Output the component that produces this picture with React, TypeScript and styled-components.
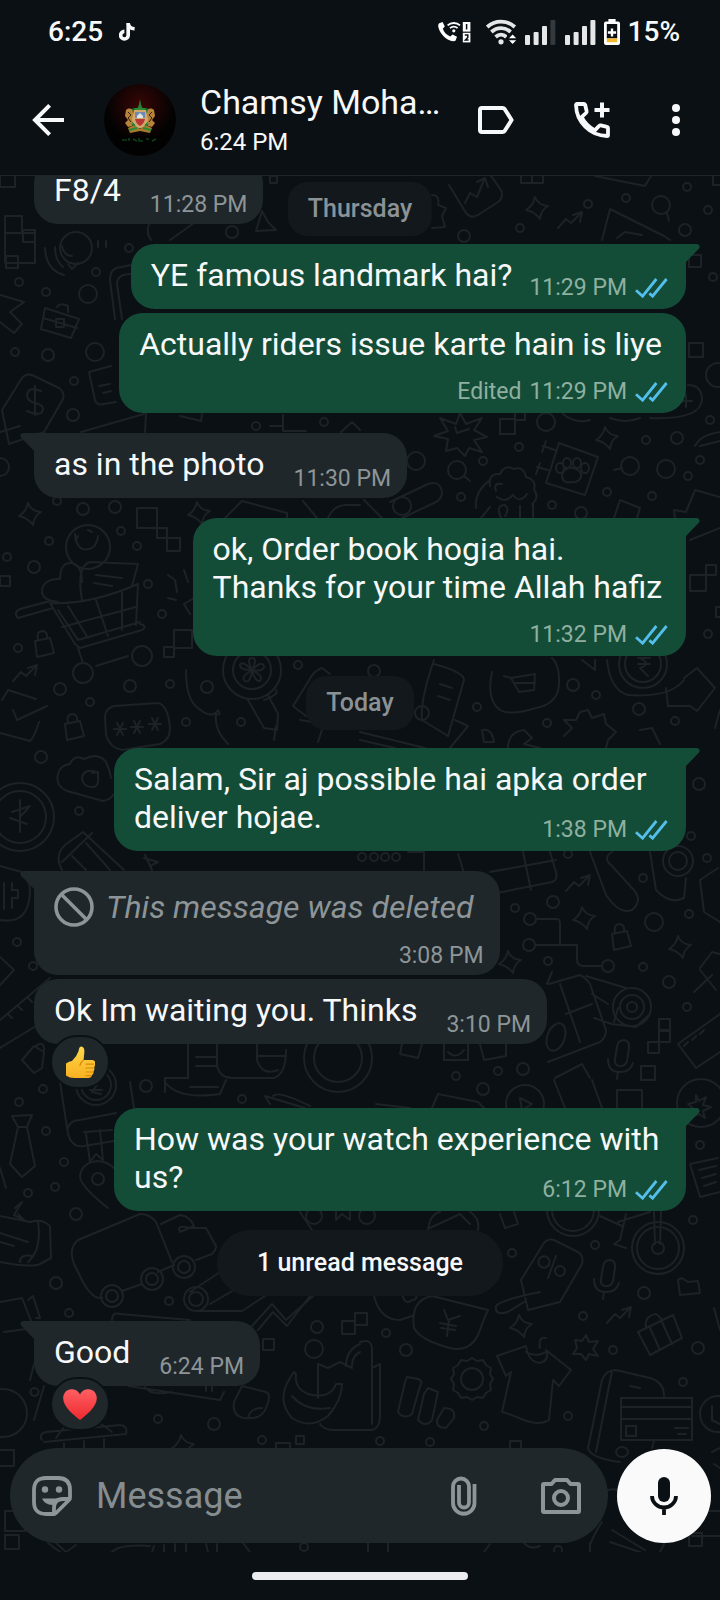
import React from "react";
import styled, { createGlobalStyle } from "styled-components";

const color = {
  page: "#0b1014",
  line: "#1c2226",
  incoming: "#1f272a",
  outgoing: "#144d37",
  text: "#f7f8fa",
  muted: "#8d9598",
  outMuted: "#8fb0a1",
  pill: "#12181c",
  tick: "#53bdeb",
};

const GlobalStyle = createGlobalStyle`
  * { box-sizing: border-box; }
  body {
    margin: 0;
    background: ${color.page};
    color: ${color.text};
    font-family: Roboto, "Noto Sans", sans-serif;
  }
  button, input { font-family: inherit; }
  svg { display: block; flex: none; }
`;

/* ---------- shell ---------- */

const Screen = styled.div`
  display: flex;
  flex-direction: column;
  height: 100vh;
  overflow: hidden;
`;

const StatusBar = styled.div`
  flex: none;
  display: flex;
  align-items: center;
  justify-content: space-between;
  height: 64px;
  padding: 0 40px 0 48px;
  font-size: 28px;
  line-height: 32px;
  font-weight: 500;
`;

const StatusGroup = styled.div<{ $gap: number }>`
  display: flex;
  align-items: center;
  gap: ${(p) => p.$gap}px;
`;

const Header = styled.header`
  flex: none;
  display: flex;
  align-items: center;
  height: 112px;
  padding: 0 32px 0 24px;
  border-bottom: 1px solid #1f2529;
`;

const IconButton = styled.button<{ $width?: number }>`
  flex: none;
  display: flex;
  align-items: center;
  justify-content: center;
  width: ${(p) => p.$width ?? 48}px;
  height: 48px;
  padding: 0;
  border: 0;
  background: none;
  color: inherit;
`;

const Avatar = styled.div`
  flex: none;
  width: 72px;
  height: 72px;
  margin-left: 32px;
  border-radius: 50%;
  overflow: hidden;
`;

const Contact = styled.div`
  flex: 1;
  min-width: 0;
  padding-left: 24px;
`;

const ContactName = styled.h1`
  margin: 0;
  font-size: 34px;
  line-height: 44px;
  font-weight: 400;
  white-space: nowrap;
`;

const ContactSeen = styled.p`
  margin: 0;
  font-size: 24px;
  line-height: 36px;
`;

const HeaderActions = styled.div`
  flex: none;
  display: flex;
  gap: 48px;
`;

/* ---------- conversation ---------- */

const Chat = styled.main`
  position: relative;
  flex: 1;
  min-height: 0;
  display: flex;
  flex-direction: column;
  overflow: hidden;
`;

const Wallpaper = styled.svg`
  position: absolute;
  inset: 0;
  width: 100%;
  height: 100%;
  fill: none;
  stroke: ${color.line};
  stroke-width: 2;
  stroke-linecap: round;
  stroke-linejoin: round;
`;

const Scroller = styled.div`
  position: relative;
  flex: 1;
  min-height: 0;
  display: flex;
  flex-direction: column-reverse;
  overflow-y: auto;
  scrollbar-width: none;
`;

const Messages = styled.div`
  display: flex;
  flex-direction: column;
  padding: 0 34px 18px;
`;

const Row = styled.div<{ $out?: boolean; $gap: number }>`
  display: flex;
  flex-direction: column;
  align-items: ${(p) => (p.$out ? "flex-end" : "flex-start")};
  margin-top: ${(p) => p.$gap}px;
  padding-left: ${(p) => (p.$out ? 80 : 0)}px;
`;

type MetaPlace = "beside" | "below" | "inline";

const BubbleBox = styled.div<{ $out?: boolean; $tail?: boolean; $place: MetaPlace }>`
  position: relative;
  display: ${(p) => (p.$place === "inline" ? "flow-root" : "grid")};
  grid-template-columns: ${(p) => (p.$place === "beside" ? "auto auto" : "auto")};
  row-gap: 7px;
  column-gap: ${(p) => (p.$out ? 17 : 29)}px;
  max-width: 100%;
  padding: ${(p) => (p.$out ? "12px 18px 7px 20px" : "12px 16px 5px 20px")};
  border-radius: 24px;
  border-top-left-radius: ${(p) => (p.$tail && !p.$out ? 0 : 24)}px;
  border-top-right-radius: ${(p) => (p.$tail && p.$out ? 0 : 24)}px;
  background: ${(p) => (p.$out ? color.outgoing : color.incoming)};
  color: ${(p) => (p.$out ? color.outMuted : color.muted)};
`;

const TailShape = styled.svg<{ $out?: boolean }>`
  position: absolute;
  top: 0;
  ${(p) => (p.$out ? "right: -14px;" : "left: -14px; transform: scaleX(-1);")}
  fill: ${(p) => (p.$out ? color.outgoing : color.incoming)};
`;

const Text = styled.p<{ $out?: boolean; $place: MetaPlace }>`
  display: ${(p) => (p.$place === "inline" ? "inline" : "block")};
  margin: 0 ${(p) => (p.$place === "below" ? 6 : 0)}px ${(p) => (p.$out ? 8 : 10)}px 0;
  color: ${color.text};
  font-size: 32px;
  line-height: 38px;
  white-space: pre-line;
`;

const DeletedText = styled.p`
  display: flex;
  align-items: center;
  gap: 12px;
  margin: 4px 10px 8px 0;
  font-size: 32px;
  line-height: 38px;
  font-style: italic;
`;

const Meta = styled.div<{ $place: MetaPlace }>`
  display: flex;
  align-items: center;
  align-self: end;
  justify-self: end;
  gap: 8px;
  font-size: 23px;
  line-height: 28px;
  white-space: nowrap;
  ${(p) => p.$place === "inline" && "float: right; margin-top: 18px;"}
`;

const Reaction = styled.button`
  position: relative;
  display: flex;
  align-items: center;
  justify-content: center;
  width: 60px;
  height: 54px;
  margin: -9px 0 -1px 16px;
  padding: 0;
  border: 2px solid ${color.page};
  border-radius: 27px;
  background: ${color.incoming};
`;

const DatePill = styled.div<{ $floating?: boolean }>`
  align-self: center;
  padding: 13px 20px;
  border-radius: 20px;
  background: ${color.pill};
  color: #8b9296;
  font-size: 25px;
  line-height: 28px;
  font-weight: 500;
  margin-top: 20px;
  ${(p) =>
    p.$floating &&
    "position: absolute; top: 6px; left: 50%; margin: 0; transform: translateX(-50%);"}
`;

const UnreadPill = styled.div`
  align-self: center;
  margin: 19px 0 5px;
  padding: 19px 40px;
  border-radius: 33px;
  background: ${color.pill};
  font-size: 25px;
  line-height: 28px;
  font-weight: 500;
`;

/* ---------- composer ---------- */

const Composer = styled.form`
  position: relative;
  flex: none;
  display: flex;
  align-items: center;
  gap: 9px;
  padding: 0 9px 9px 10px;
`;

const Field = styled.div`
  flex: 1;
  min-width: 0;
  display: flex;
  align-items: center;
  height: 95px;
  padding: 0 23px 0 18px;
  border-radius: 48px;
  background: ${color.incoming};
  color: ${color.muted};
`;

const MessageInput = styled.input`
  flex: 1;
  min-width: 0;
  padding: 0 0 0 20px;
  border: 0;
  outline: 0;
  background: none;
  color: ${color.text};
  font-size: 36px;
  line-height: 44px;
  &::placeholder {
    color: #868d91;
    opacity: 1;
  }
`;

const FieldActions = styled.div`
  flex: none;
  display: flex;
  gap: 49px;
`;

const MicButton = styled.button`
  flex: none;
  display: flex;
  align-items: center;
  justify-content: center;
  width: 94px;
  height: 94px;
  padding: 0;
  border: 0;
  border-radius: 50%;
  background: #fafafa;
  color: ${color.page};
`;

const NavBar = styled.div`
  flex: none;
  display: flex;
  justify-content: center;
  height: 48px;
  padding-top: 20px;
`;

const NavHandle = styled.div`
  width: 30%;
  height: 8px;
  border-radius: 4px;
  background: #ececee;
`;

/* ---------- icons ---------- */

const TikTokIcon = () => (
  <svg width="16" height="18" viewBox="0 0 16 18" fill="none" stroke="currentColor" strokeWidth="3.6">
    <path d="M9.2 0V12.4A3.8 3.8 0 1 1 5.4 8.4" />
    <path d="M9.2 .4C9.6 3.6 12 5.6 15.6 5.8" />
  </svg>
);

const WifiCallIcon = () => (
  <svg width="33" height="22" viewBox="0 0 33 22" fill="none">
    <path
      fill="#fff"
      d="M1.2 2.2 4.6 1 6.8 5.6 4.8 7.8C6 11.4 8.6 14 12.2 15.4L14.6 13.4 19 15.8 17.6 19.4C16.8 20.6 14 20.4 11.4 19.2 6 16.8 1.6 11.6.4 6.2 0 4.4.2 3 1.2 2.2Z"
    />
    <path stroke="#fff" strokeWidth="1.8" d="M9.6 4.4C13 1.2 18.6 1.2 22 4.4M12 7.2C14.2 5.2 17.4 5.2 19.6 7.2" />
    <circle cx="15.8" cy="9.8" r="1.6" fill="#fff" />
    <rect x="24.8" y="1" width="7.6" height="9.6" fill="#fff" />
    <rect x="24.8" y="11.8" width="7.6" height="9.6" fill="#fff" />
    <path stroke={color.page} strokeWidth="1.5" d="M28.6 3V8.6M26.8 14H29.8V16.4L27.4 19H30.6" />
  </svg>
);

const WifiIcon = () => (
  <svg width="31" height="26" viewBox="0 0 31 26" fill="none" stroke="#e4e6e8" strokeWidth="3.8">
    <path d="M1.2 8C9 .8 21 .8 28.8 8M5.4 13C11 7.8 19 7.8 24.6 13M9.6 18C12.8 15 17.2 15 20.4 18" />
    <circle cx="15" cy="22.8" r="2.6" fill="#e4e6e8" stroke="none" />
    <path fill={color.page} stroke="none" d="M21 14.5H31V26H21Z" />
    <path fill="#fff" stroke="none" d="M23 19.2 26.6 15.4 30.2 19.2ZM23 21.2H30.2L26.6 25Z" />
  </svg>
);

const SignalIcon = ({ dim }: { dim?: boolean }) => (
  <svg width="31" height="25" viewBox="0 0 31 25" fill="#e4e6e8">
    <rect x="0" y="15" width="5" height="10" rx="1" />
    <rect x="8.6" y="12" width="5" height="13" rx="1" />
    <rect x="17" y="6" width="5" height="19" rx="1" />
    <rect x="25.4" y="0" width="5" height="25" rx="1" fill={dim ? "#34393d" : "#e4e6e8"} />
  </svg>
);

const BatteryIcon = () => (
  <svg width="16" height="26" viewBox="0 0 16 26">
    <path fill="#fff" d="M4.4 0H11.6V2.4H14A2 2 0 0 1 16 4.4V24A2 2 0 0 1 14 26H2A2 2 0 0 1 0 24V4.4A2 2 0 0 1 2 2.4H4.4Z" />
    <rect x="2.8" y="5" width="10.4" height="14.4" fill={color.page} />
    <rect x="2.8" y="19.4" width="10.4" height="3.8" fill="#f5b82e" />
    <path stroke="#fff" strokeWidth="2.4" d="M8 9.4V17.6M3.9 13.5H12.1" />
  </svg>
);

const BackIcon = () => (
  <svg width="32" height="32" viewBox="0 0 32 32" fill="none" stroke="currentColor" strokeWidth="4">
    <path d="M32 16H3M17.6 1.4 3 16 17.6 30.6" />
  </svg>
);

const LabelIcon = () => (
  <svg width="36" height="28" viewBox="0 0 36 28" fill="none" stroke="currentColor" strokeWidth="4" strokeLinejoin="round">
    <path d="M4 2H24.6Q25.8 2 26.6 3L33.6 14 26.6 25Q25.8 26 24.6 26H4Q2 26 2 24V4Q2 2 4 2Z" />
  </svg>
);

const AddCallIcon = () => (
  <svg width="36" height="36" viewBox="0 0 36 36" fill="none" stroke="currentColor" strokeWidth="3.8" strokeLinejoin="round">
    <path d="M2 3Q2 2 3 2H10Q11 2 11.2 3L12.6 9.2Q12.8 10.2 12 11L7.6 15.2C10.4 20.6 15.4 25.6 20.8 28.4L25 24Q25.8 23.2 26.8 23.4L33 24.8Q34 25 34 26V33Q34 34 33 34C16 33.6 2.4 20 2 3Z" />
    <path strokeWidth="4" d="M28 .5V15.5M20.5 8H35.5" />
  </svg>
);

const MoreIcon = () => (
  <svg width="8" height="32" viewBox="0 0 8 32" fill="currentColor">
    <circle cx="4" cy="4" r="4" />
    <circle cx="4" cy="16" r="4" />
    <circle cx="4" cy="28" r="4" />
  </svg>
);

const AvatarArt = () => (
  <svg width="72" height="72" viewBox="0 0 72 72">
    <defs>
      <radialGradient id="glow" cx="50%" cy="30%" r="48%">
        <stop offset="0" stopColor="#3a0606" />
        <stop offset="1" stopColor="#020202" />
      </radialGradient>
    </defs>
    <rect width="72" height="72" fill="url(#glow)" />
    <path fill="#2a7a33" d="M36 15 37.2 21 39 25H33L34.800 21Z" />
    <path fill="#1d6b2c" d="M22 27 30 24H42L50 27 47 31H25Z" />
    <path
      fill="#b5833a"
      d="M22 26C26 23 29 25 29 29L31 35 28 42 24 43 21 39 24 36 21 32ZM50 26C46 23 43 25 43 29L41 35 44 42 48 43 51 39 48 36 51 32Z"
    />
    <path fill="none" stroke="#3a1f0a" strokeWidth="1" d="M24 28 27 31 24 34 27 38M48 28 45 31 48 34 45 38" />
    <path fill="#a87a2c" d="M24 44 30 41 36 45 42 41 48 44 46 49 36 47 26 49Z" />
    <path fill="#cfa86a" d="M30 26H42L44 36Q42 43 36 44.5 30 43 28 36Z" />
    <path fill="#b93636" d="M31 35H41Q40 40 36 42 32 40 31 35Z" />
    <path fill="#7088ad" d="M31 28H41V34H31Z" />
    <path fill="#dfe5e2" d="M33 32 36 29 39 32V34H33Z" />
    <path stroke="#2a8a38" strokeWidth="2" fill="none" d="M25 46 33 44M39 44 47 46M31 25H41M28 39 31 42M44 39 41 42" />
    <path stroke="#0e3f17" strokeWidth="1.6" fill="none" d="M18 56H23M25 54V57M29 55 33 57M35 54V57H39M42 55H45M48 57 52 55" />
  </svg>
);

const TicksIcon = () => (
  <svg width="33" height="20" viewBox="0 0 33 20" fill="none" stroke={color.tick} strokeWidth="2.8" role="img" aria-label="Read">
    <path d="M1 12.2 7.6 18.2 21.4 1M14.4 15.4 17.6 18.2 31.6 1" />
  </svg>
);

const BlockedIcon = () => (
  <svg width="40" height="40" viewBox="0 0 40 40" fill="none" stroke="currentColor" strokeWidth="3.6">
    <circle cx="20" cy="20" r="18" />
    <path d="M7 7 33 33" />
  </svg>
);

const ThumbIcon = () => (
  <svg width="31" height="33" viewBox="0 0 31 33" role="img" aria-label="Thumbs up">
    <defs>
      <linearGradient id="thumb" x1="0" y1="0" x2="0" y2="1">
        <stop offset="0" stopColor="#ffd84a" />
        <stop offset="1" stopColor="#f9b021" />
      </linearGradient>
    </defs>
    <path
      fill="url(#thumb)"
      d="M1 17.5Q4 15 7 15 12 10 13.6 5 14 .6 16.600 .6 20 1.500 19.300 7L18.600 14H27.500Q30.400 14.500 30 17 30.500 19.500 29.300 21 30 23.500 28.600 25.500 28.800 28 27 29 26.500 32 23 32H11Q5 32.500 1 29.500Z"
    />
    <path fill="none" stroke="#d98a0a" strokeWidth="1.2" d="M29 18.200H20.500M29 22H20.500M28 26H20.500M26.500 29.600H20.500M18.600 14Q15 17 14.800 20" />
  </svg>
);

const HeartIcon = () => (
  <svg width="34" height="31" viewBox="0 0 34 31" role="img" aria-label="Red heart">
    <defs>
      <linearGradient id="heart" x1="0" y1="0" x2="0" y2="1">
        <stop offset="0" stopColor="#ff5f62" />
        <stop offset="1" stopColor="#ee2a30" />
      </linearGradient>
    </defs>
    <path
      fill="url(#heart)"
      d="M17 5.500C19 1.500 22.500 .3 25.500 .3 30.500 .3 34 4.500 33.800 9.500 33.500 17.500 25 24.500 18.500 30Q17 31.300 15.500 30C9 24.500 .5 17.500 .2 9.500 0 4.500 3.500 .3 8.500 .3 11.500 .3 15 1.500 17 5.500Z"
    />
  </svg>
);

const StickerIcon = () => (
  <svg width="40" height="40" viewBox="0 0 40 40" fill="none" stroke="currentColor" strokeWidth="3.8" strokeLinejoin="round">
    <path d="M22 38H14Q2 38 2 26V14Q2 2 14 2H26Q38 2 38 14V21.500Q38 23 37 24L24 37Q23 38 22 38Z" />
    <path d="M22 37V32Q22 23 31 23H37" />
    <circle cx="13" cy="13.5" r="3.2" fill="currentColor" stroke="none" />
    <circle cx="27" cy="13.5" r="3.2" fill="currentColor" stroke="none" />
    <path fill="currentColor" stroke="none" d="M10 22.500H26.500Q22.500 25 21.500 29 13 29.500 10 22.500Z" />
  </svg>
);

const ClipIcon = () => (
  <svg width="26" height="40" viewBox="0 0 26 40" fill="none" stroke="currentColor" strokeWidth="3.8">
    <path d="M23.500 8V27A10.700 10.700 0 0 1 2 27V10.500A8 8 0 0 1 18 10.500V26.500A5 5 0 0 1 8 26.500V9" />
  </svg>
);

const CameraIcon = () => (
  <svg width="40" height="36" viewBox="0 0 40 36" fill="none" stroke="currentColor" strokeWidth="4" strokeLinejoin="round">
    <path d="M3 6H10.500L14 2H26L29.500 6H37Q38 6 38 7V33Q38 34 37 34H3Q2 34 2 33V7Q2 6 3 6Z" />
    <circle cx="20" cy="20" r="7" />
  </svg>
);

const MicIcon = () => (
  <svg width="28" height="38" viewBox="0 0 28 38" fill="none" stroke="currentColor" strokeWidth="3.8">
    <rect x="8" y="0" width="12" height="25" rx="6" fill="currentColor" stroke="none" />
    <path d="M2 19A12 11.500 0 0 0 26 19M14 30V38" />
  </svg>
);

/* ---------- wallpaper ---------- */

type Dot = [number, number];

const smallDots: Dot[] = [
  [687, 187], [626, 198], [588, 204], [520, 228], [708, 210], [19, 282], [46, 292], [96, 272],
  [129, 248], [15, 352], [74, 381], [49, 541], [121, 531], [137, 546], [7, 557], [148, 584],
  [162, 614], [18, 648], [324, 422], [57, 501], [710, 420], [646, 440], [519, 447], [483, 461],
  [461, 497], [552, 505], [607, 492], [652, 496], [688, 476], [700, 460], [713, 277], [708, 634],
  [90, 702], [170, 684], [186, 722], [241, 722], [298, 665], [79, 811], [17, 942], [33, 966],
  [477, 707], [547, 723], [596, 695], [675, 721], [691, 836], [643, 878], [568, 854], [515, 908],
  [548, 961], [643, 967], [689, 914], [707, 858], [687, 1007], [498, 1071], [456, 1076], [43, 1089],
  [19, 1102], [46, 1131], [64, 1162], [28, 1193], [55, 1187], [69, 1313], [169, 1301], [242, 1099],
  [512, 1253], [595, 1245], [693, 1220], [583, 1316], [700, 1145], [386, 1333], [158, 1419],
  [262, 1440], [613, 1350], [683, 1382], [568, 1416], [484, 1426], [380, 1441], [430, 1442],
  [304, 1547], [558, 1550], [374, 857], [385, 857], [396, 857], [362, 857],
];

const mediumDots: Dot[] = [
  [685, 230], [232, 232], [48, 355], [73, 415], [83, 509], [115, 507], [34, 567], [677, 438],
  [581, 513], [60, 689], [130, 686], [41, 757], [207, 687], [374, 671], [573, 685], [639, 709],
  [699, 784], [553, 902], [669, 982], [523, 1069], [146, 1086], [76, 1214], [56, 1283], [317, 1327],
  [483, 1089], [644, 1293], [214, 1424], [406, 1350], [698, 1348], [464, 236],
];

const largeDots: Dot[] = [
  [88, 294], [95, 352], [0, 467], [546, 422], [666, 469], [654, 922], [314, 1349], [661, 205],
  [630, 466], [457, 470], [416, 461], [402, 506],
];

const sparkles: Dot[] = [
  [537, 208], [30, 514], [199, 513], [607, 438], [584, 918], [680, 947], [510, 962], [521, 1326],
  [183, 1446],
];

const trends: Dot[] = [[570, 220], [25, 673], [578, 883], [619, 1315]];

const padlocks: Dot[] = [[43, 645], [73, 728], [620, 938]];

const mics: Dot[] = [[622, 1055], [608, 1275]];

const rings: [number, number, number][] = [
  [76, 248, 16], [252, 670, 29], [252, 670, 19], [20, 817, 34], [20, 817, 26], [88, 547, 22],
  [643, 664, 24], [643, 664, 18], [678, 861, 15], [678, 861, 9], [632, 1007, 19], [632, 1007, 12],
  [632, 1007, 5], [701, 1103, 24], [573, 1210, 26], [573, 1210, 21], [658, 1248, 26], [658, 1248, 21],
  [658, 1248, 6], [112, 1296, 11], [112, 1296, 6], [152, 1279, 11], [152, 1279, 6], [184, 1267, 11],
  [184, 1267, 6], [196, 1299, 12], [196, 1299, 7], [98, 1179, 6], [472, 1379, 11], [3, 1413, 24],
  [718, 1414, 18], [530, 919, 6], [529, 945, 6], [608, 966, 6], [422, 713, 7], [338, 1058, 34],
  [338, 1058, 24], [83, 673, 10], [142, 656, 10], [96, 1085, 20], [96, 1085, 15], [525, 1104, 19],
  [256, 426, 4], [367, 1216, 8], [314, 1216, 8], [718, 375, 12],
];

const squares: [number, number, number][] = [
  [0, 172, 15], [5, 216, 17], [5, 233, 30], [23, 230, 12], [270, 176, 7], [6, 256, 12], [137, 508, 20],
  [157, 528, 10], [167, 538, 13], [174, 630, 18], [164, 647, 10], [0, 576, 10], [500, 419, 15],
  [515, 410, 10], [689, 343, 14], [689, 255, 12], [706, 565, 10], [716, 607, 10], [690, 575, 16],
  [659, 1019, 11], [648, 1042, 11], [659, 1031, 11], [342, 1321, 13], [355, 1313, 12], [263, 1339, 11],
  [276, 1443, 14], [296, 1436, 8], [510, 1441, 11], [5, 1511, 20], [5, 1535, 14], [617, 1090, 25],
  [641, 1066, 14], [689, 1533, 13], [368, 1542, 20],
];

const sketches = [
  // chart card, box and flyer beneath the header
  "M449 185 466 213Q471 219 478 215L498 202Q504 198 501 190L491 176M465 203 470 193 477 197 484 180M477 182 485 178 488 187",
  "M521 176V183H543V176M532 176V183M595 176 645 186 651 176M432 195Q440 195 438 205L446 208 442 216 445 227 432 228",
  "M602 240 610 209 664 236 670 240M617 238 625 232 642 235M713 176V185H720",
  "M150 222Q145 232 151 240M194 223 170 240M256 231 262 211 268 222 276 230ZM667 213 669 221",
  // talking phone and its waves
  "M68 264 72 269 78 263M45 248Q46 270 64 275M55 247Q55 260 63 267M62 246Q64 256 72 256M98 247V241M106 247V241",
  // pen tip, briefcase, price tag
  "M0 295 24 302 10 312 22 324 14 333 0 322M45 308 79 319 71 338 41 329ZM57 307Q60 302 68 306V312M43 318 77 328M56 319H64V327H56Z",
  "M2 410 22 378Q26 373 32 375L59 388Q65 392 63 399L44 432M2 410 9 444 44 432M41 391Q28 386 27 395 27 401 35 403 44 405 43 410 41 417 27 411M35 386V415M0 432 20 426",
  "M115 319 110 280Q110 267 122 267L131 265M122 319 117 284Q117 274 131 274M89 372 111 366M89 372 95 400Q97 406 104 404L116 402M99 386 110 384M103 393 111 391M81 432 144 414M146 414 145 432",
  "M180 416 201 421 202 414M270 426H283V431H306M283 426V415M341 432 352 422 360 430",
  // starburst, paw card, poodle
  "M434 436 448 431 440 418 456 424 460 413 466 424 482 418 474 430 487 437 474 440 482 452 469 448 465 456 457 448 446 451 448 439ZM455 427 457 433 469 429",
  "M559 443 598 457 585 495 546 483ZM562 475Q565 466 573 468 582 470 581 477 578 483 572 482 562 484 562 475ZM543 446 555 450M546 441 542 452M537 467 548 470M540 463 536 474",
  "M560 463A4 5 0 1 1 560 473 4 5 0 1 1 560 463M567 458A4 5 0 1 1 567 468 4 5 0 1 1 567 458M577 458A4 5 0 1 1 577 468 4 5 0 1 1 577 458M585 463A4 5 0 1 1 585 473 4 5 0 1 1 585 463",
  "M490 486Q488 473 500 474 505 464 514 469 524 466 526 477 537 480 534 490 540 497 532 504M496 491Q493 482 502 484M497 497Q505 504 513 495 520 504 527 494M490 480Q474 492 476 508M501 518Q495 505 505 505 510 510 505 516M520 506V518M533 504V518M481 518 490 507",
  "M390 502 428 484Q440 480 442 492 442 500 434 503L402 518M364 500 382 518M464 476 470 481M614 470 622 468M614 518 620 500 640 508 637 518M675 518 674 510 686 512 695 490 720 497M690 540 720 528M695 446Q700 435 720 432M700 446 720 441",
  "M225 518 242 501 287 513V518M303 501 317 518M328 518Q333 506 345 505H360M563 414Q575 424 590 420M610 418Q625 424 640 418M650 418Q700 420 702 400 702 385 688 385M680 401H692M686 395V407",
  // shopping cart full of goods
  "M18 618Q13 612 20 609L50 601M18 618 53 608M50 603 75 644M58 610 78 640 140 622M75 644 80 648 142 630Q148 626 140 624M50 603Q90 605 138 584L136 625M68 606 88 638M96 600 108 636M122 592V630M62 627 136 607M78 648 83 663M96 666 128 656",
  "M58 602Q38 600 43 586 48 578 60 579 60 562 72 563 82 566 82 582M82 600Q76 566 90 562L138 564 132 586M96 575 122 578M94 583 112 586M75 534Q75 544 82 549 96 552 98 536M76 540 78 536M88 530 92 532",
  "M168 575 175 580 177 592M168 598 176 600M184 570 188 582M194 598 184 604 190 614",
  // mail, password plate, cloud, guitar pick
  "M2 700 8 690 36 699M13 710 17 720 47 706M0 733 30 741Q34 738 39 722M114 706 158 703Q168 705 170 728 170 740 160 744L122 750Q110 748 106 735L105 716Q106 708 114 706Z",
  "M114 729H126M117 723 123 735M123 723 117 735M131 727H143M134 721 140 733M140 721 134 733M149 724H161M152 718 158 730M158 718 152 730",
  "M67 791Q55 786 58 774 60 765 70 764 74 754 84 759 98 752 106 762 110 770 111 778M67 791 103 801Q110 800 114 794M96 772Q84 768 82 778 83 788 94 787 99 785 98 778M92 773 98 772V778",
  "M20 800V832M10 818 27 824M12 812 30 806M20 817 30 806",
  "M186 670Q186 700 198 708 212 720 218 710 222 716 216 714 214 730 228 744M248 700 264 728 277 730 278 714 268 695M274 740 276 726M264 700Q280 694 276 690",
  "M252 670Q246 658 252 658 258 658 252 670 262 660 264 666 264 672 252 670 264 676 260 681 255 682 252 670 250 684 245 681 240 677 252 670 240 670 240 665 242 660 252 670Z",
  // suitcase, bookmarks, shield
  "M62 870Q54 855 65 845L83 832 124 870M62 862 92 833M72 856 86 870M86 843 110 870M145 855 152 870M144 858 158 862 150 866M0 866 22 872M0 920Q30 925 30 890 30 880 22 876M4 883V909M12 883V890H18V898H12V908",
  "M0 957 14 970 0 985M0 1020 50 978M8 1014 12 1018M18 1006 22 1010M28 998 32 1002M0 1048 36 1026M22 1060 34 1046 44 1052 42 1068 34 1073ZM36 1046Q44 1040 44 1050M293 706 308 682Q314 670 322 668L330 674M293 706 306 716",
  "M434 660Q420 700 422 720L448 736 464 680Q464 672 434 664M440 684 452 688M438 696 450 700M360 732 425 748M360 740 395 748M450 748 468 726 455 720M300 720 325 724M318 742 322 730",
  // storefront badges and arrows
  "M492 672Q486 700 500 710 510 716 536 708 558 704 559 684 560 665 552 658M504 676 511 678 519 692 534 690 535 674 511 678M515 683H535M607 660Q610 690 628 695 670 698 684 680M638 658H650M638 664H650M640 658Q652 664 640 668L648 676",
  "M684 678 697 668 715 688 697 711 690 706H668L666 688M582 660 595 670V660M564 736 572 728 564 720 576 720 580 712 588 710 592 718 604 714 606 724 616 732 608 740 606 748M482 730Q492 728 494 742L484 742ZM508 748Q508 732 524 730L532 738 524 744 540 748M640 730 652 728 660 744M715 728 720 710",
  "M458 854 472 898 552 882Q558 880 556 872L550 852M490 872 556 860M523 852 531 890M590 852 606 895Q620 915 632 910 644 900 632 888L612 866Q602 858 612 852M650 852 656 890Q670 905 684 898L686 878",
  "M408 852H424V870M700 880 718 868M700 880 704 912 720 922M536 919H557Q560 919 560 924V945M535 945H577V960Q577 966 584 966H601",
  "M549 984 580 975Q586 978 590 984L606 1030Q606 1038 600 1042L548 1062M560 984 580 1042M566 1014 592 1004M586 976 626 988M592 994 608 1004M594 1018 612 1024 636 1027 650 1014M614 1022 618 1008M547 984 552 972M556 1024A8 13 20 1 0 556 1050 8 13 20 1 0 556 1024",
  "M700 968 712 952 720 954M694 992 712 975M700 970 716 990M678 1044 720 1014M678 1044 696 1068 720 1052M684 1046 688 1042M692 1040 696 1036M700 1034 704 1030M555 1078 582 1064 590 1078",
  // tie, note book, map pin
  "M12 1116 32 1115 27 1127H18ZM18 1127 10 1164 22 1177 35 1166 27 1127M60 1082 68 1134M130 1082 134 1108M68 1128Q70 1120 80 1120L116 1113M68 1134Q72 1148 84 1146L114 1141M84 1132 112 1130M86 1134 90 1162 96 1154 103 1160 100 1130",
  "M108 1208Q80 1186 80 1176 82 1162 98 1161 108 1162 114 1168M90 1090H102M92 1082 100 1080 92 1092 101 1094",
  "M15 1208 22 1202 17 1210 14 1215 24 1220 18 1214M0 1216 30 1222Q42 1218 50 1226L51 1258 40 1264Q30 1268 0 1262M0 1233 28 1242M0 1242 14 1246M38 1222Q42 1250 28 1262M20 1262Q20 1254 32 1256M0 1302 22 1298 34 1328 4 1332M28 1300 33 1296 40 1318 36 1318M0 1168 6 1188",
  // truck
  "M74 1264Q68 1248 78 1240L140 1214Q150 1214 156 1222L172 1262M74 1264 84 1284Q94 1300 102 1298M122 1291 142 1284M158 1272 174 1265M161 1224 180 1215Q190 1216 194 1226L180 1232Q176 1224 190 1228L206 1228 216 1246Q216 1250 212 1254L196 1260",
  "M190 1292 220 1272M198 1311H242L268 1294M210 1304 234 1290M252 1326 272 1304 286 1320 322 1288M258 1330 273 1312 287 1326 310 1296M112 1320Q112 1312 120 1314L190 1320M128 1386 220 1400 224 1392M145 1387Q150 1396 172 1392M206 1384V1391M212 1384V1391",
  // mug shelf
  "M165 1082Q178 1100 220 1094L226 1080M190 1087H218M188 1044V1078H165V1092M196 1057H216M196 1066H216M217 1044V1066Q220 1078 232 1078H274Q286 1074 286 1050M257 1044V1060Q262 1076 278 1070M258 1056H284M402 1044 400 1054 418 1058 422 1044M444 1044V1060H468V1044M480 1044 484 1060 506 1056V1044M448 1052Q456 1060 464 1050",
  "M265 1096 305 1108M265 1096 270 1104M273 1096Q278 1090 310 1106M376 1104 410 1108M432 1108 438 1094 478 1102 486 1110M520 1098 532 1104 522 1110ZM554 1080 565 1108M592 1080 602 1108",
  "M696 1095 699 1101 706 1097 703 1105 711 1107 703 1111 705 1118 699 1114 692 1117 694 1109 688 1104 696 1102Z",
  // bicycle, discount tag, receipt
  "M600 1216 622 1226M626 1214 620 1240 614 1244 626 1248M654 1212 655 1244M661 1212 660 1244M618 1222 650 1212M690 1164 718 1158M690 1164 700 1197 720 1192M699 1170 716 1166M702 1178 716 1174M704 1186 716 1182",
  "M521 1280 542 1246Q546 1238 554 1240L578 1252Q584 1256 582 1264L560 1302 528 1310ZM540 1258A5 5 0 1 1 548 1266 5 5 0 1 1 540 1258M556 1256 548 1278M556 1268A5 5 0 1 1 564 1274 5 5 0 1 1 556 1268M540 1292Q500 1300 496 1306 494 1316 508 1312L524 1302",
  "M678 1280 682 1278 688 1282 698 1281 700 1293 680 1295ZM500 1214 505 1228 518 1224 514 1212M428 1230Q430 1214 440 1212M478 1230Q480 1218 470 1212M430 1228 460 1214 470 1224M300 1212 312 1230M336 1212V1220L342 1214 350 1220V1212",
  "M374 1296Q380 1320 400 1320L412 1316M402 1294Q405 1306 412 1300 418 1300 416 1294M488 1310 432 1296Q410 1300 414 1328 420 1340 450 1348 474 1354 482 1324L488 1310M444 1310 448 1320 460 1316M449 1320 447 1336M440 1323 456 1326M441 1328 455 1330",
  // garments, gear, bars
  "M497 1356 526 1346Q528 1362 540 1363 550 1360 546 1350L571 1370 559 1386 553 1380 549 1420Q540 1426 524 1420 510 1414 502 1412L511 1372 506 1376ZM540 1348Q538 1336 546 1338M526 1352Q536 1358 546 1352",
  "M407 1377 418 1379Q424 1382 420 1386L412 1414Q404 1420 398 1412L405 1382ZM428 1388 438 1392 432 1420Q426 1428 418 1420L424 1394ZM444 1408Q456 1408 454 1418L446 1428Q436 1428 437 1420Z",
  "M472 1358 477 1361 483 1360 486 1365 491 1368 490 1374 493 1379 490 1384 491 1390 486 1393 483 1398 477 1397 472 1400 467 1397 461 1398 458 1393 453 1390 454 1384 451 1379 454 1374 453 1368 458 1365 461 1360 467 1361Z",
  "M586 1335 589 1342 598 1341 593 1349 598 1356 589 1354 586 1360 581 1354 573 1354 577 1348 575 1340 582 1341Z",
  "M638 1332 673 1315 682 1338 650 1355ZM646 1328Q644 1316 656 1314 662 1318 662 1322M650 1328 660 1350M662 1322 672 1344M714 1308 720 1330",
  // handset and bank card
  "M621 1398H692V1440H621ZM621 1407H692M621 1419H692M626 1426H636V1436H626ZM675 1428H688M678 1434H686M664 1396Q664 1382 650 1378L616 1370Q606 1370 602 1380L588 1448Q590 1458 620 1462M612 1371 596 1452M630 1386 640 1388M616 1452A6 5 0 1 0 628 1452 6 5 0 1 0 616 1452M654 1441 652 1448",
  "M712 1452 720 1448M714 1464 720 1468M712 1406V1420L720 1424",
  // fruit bag and basket
  "M294 1372 290 1378Q276 1400 292 1418 310 1430 328 1416 342 1400 342 1384L336 1384Q330 1400 308 1394 294 1388 296 1374ZM292 1396Q306 1412 330 1408M318 1398V1364L328 1368 340 1362 352 1368M320 1424Q324 1430 334 1430H372Q380 1428 380 1416V1364L372 1368M346 1366Q346 1350 360 1344M352 1366Q352 1356 360 1352M360 1342Q372 1338 372 1350V1424",
  "M242 1386 266 1392Q272 1394 266 1408 262 1420 244 1418 232 1416 234 1402ZM248 1418Q250 1408 262 1408M42 1440Q38 1434 46 1432L120 1425Q128 1426 126 1434L44 1442M56 1438 66 1424M112 1432 96 1420M64 1443V1448M84 1441V1448M104 1439V1448M0 1450H14V1466H0M34 1420 44 1386M34 1388A4 4 0 1 0 35 1388M30 1380 34 1364",
  // strip under the composer
  "M48 1543 60 1552M56 1543 66 1552 76 1545M112 1552Q120 1544 150 1546M152 1552 154 1546M164 1552V1545M175 1552V1544M186 1552V1544M206 1544 208 1552M217 1552V1544M243 1543 250 1552M484 1552 490 1544M524 1543Q530 1550 540 1546M590 1543V1552M598 1502Q604 1486 618 1490M622 1510 644 1520M612 1530 645 1550M610 1542 640 1552M602 1522Q596 1530 590 1545M700 1511H720M692 1536H720M660 1552 664 1544",
];

const Doodles = () => (
  <Wallpaper viewBox="0 176 720 1376" preserveAspectRatio="xMidYMid slice" aria-hidden="true">
    {smallDots.map(([x, y]) => (
      <circle key={`s${x}-${y}`} cx={x} cy={y} r="4" />
    ))}
    {mediumDots.map(([x, y]) => (
      <circle key={`m${x}-${y}`} cx={x} cy={y} r="6" />
    ))}
    {largeDots.map(([x, y]) => (
      <circle key={`l${x}-${y}`} cx={x} cy={y} r="9" />
    ))}
    {rings.map(([x, y, r]) => (
      <circle key={`r${x}-${y}-${r}`} cx={x} cy={y} r={r} />
    ))}
    {squares.map(([x, y, s]) => (
      <rect key={`q${x}-${y}`} x={x} y={y} width={s} height={s} />
    ))}
    {sparkles.map(([x, y]) => (
      <path key={`k${x}-${y}`} transform={`translate(${x} ${y})`} d="M-2-11Q1-3 11-2 4 2 3 11-2 4-11 2-4-2-2-11Z" />
    ))}
    {trends.map(([x, y]) => (
      <path key={`t${x}-${y}`} transform={`translate(${x} ${y})`} d="M-12 8-4-1 1 3 11-7M3-5 12-8 10 2" />
    ))}
    {padlocks.map(([x, y]) => (
      <path key={`p${x}-${y}`} transform={`translate(${x} ${y})`} d="M-8-4 7-7 11 8-6 12ZM-5-5Q-7-14 0-14 5-13 4-7" />
    ))}
    {mics.map(([x, y]) => (
      <path
        key={`c${x}-${y}`}
        transform={`translate(${x} ${y})`}
        d="M-5-8Q-4-15 2-15 8-14 7-7L5 6Q3 12-3 11-8 10-7 4ZM-14 4Q-14 16-4 17 8 18 11 8M-4 17-5 24"
      />
    ))}
    {sketches.map((d) => (
      <path key={d} d={d} />
    ))}
  </Wallpaper>
);

/* ---------- message ---------- */

interface BubbleProps {
  out?: boolean;
  tail?: boolean;
  gap?: number;
  place?: MetaPlace;
  time: string;
  edited?: boolean;
  deleted?: boolean;
  reaction?: React.ReactNode;
  children: React.ReactNode;
}

const Bubble = ({ out, tail, gap = 20, place = "beside", time, edited, deleted, reaction, children }: BubbleProps) => (
  <Row $out={out} $gap={gap}>
    <BubbleBox $out={out} $tail={tail} $place={place}>
      {tail && (
        <TailShape $out={out} width="15" height="20" viewBox="0 0 15 20" aria-hidden="true">
          <path d="M0 0H12Q16 1 14 4.5L1 18V20H0Z" />
        </TailShape>
      )}
      {deleted ? (
        <DeletedText>
          <BlockedIcon />
          {children}
        </DeletedText>
      ) : (
        <Text $out={out} $place={place}>{children}</Text>
      )}
      <Meta $place={place}>
        {edited && <span>Edited</span>}
        <time>{time}</time>
        {out && <TicksIcon />}
      </Meta>
    </BubbleBox>
    {reaction && <Reaction type="button">{reaction}</Reaction>}
  </Row>
);

export default function App() {
  return (
    <>
      <GlobalStyle />
      <Screen>
        <StatusBar>
          <StatusGroup $gap={16}>
            <span>6:25</span>
            <TikTokIcon />
          </StatusGroup>
          <StatusGroup $gap={8}>
            <StatusGroup $gap={15}>
              <WifiCallIcon />
              <WifiIcon />
            </StatusGroup>
            <StatusGroup $gap={9}>
              <SignalIcon dim />
              <SignalIcon />
            </StatusGroup>
            <BatteryIcon />
            <span>15%</span>
          </StatusGroup>
        </StatusBar>

        <Header>
          <IconButton aria-label="Back">
            <BackIcon />
          </IconButton>
          <Avatar>
            <AvatarArt />
          </Avatar>
          <Contact>
            <ContactName>Chamsy Moha…</ContactName>
            <ContactSeen>6:24 PM</ContactSeen>
          </Contact>
          <HeaderActions>
            <IconButton aria-label="Label chat">
              <LabelIcon />
            </IconButton>
            <IconButton aria-label="Add call">
              <AddCallIcon />
            </IconButton>
            <IconButton $width={24} aria-label="More options">
              <MoreIcon />
            </IconButton>
          </HeaderActions>
        </Header>

        <Chat>
          <Doodles />
          <Scroller>
            <Messages>
              <Bubble time="11:28 PM">F8/4</Bubble>
              <Bubble out tail time="11:29 PM">YE famous landmark hai?</Bubble>
              <Bubble out gap={4} place="below" edited time="11:29 PM">
                Actually riders issue karte hain is liye
              </Bubble>
              <Bubble tail time="11:30 PM">as in the photo</Bubble>
              <Bubble out tail place="below" time="11:32 PM">
                {"ok, Order book hogia hai.\nThanks for your time Allah hafiz"}
              </Bubble>
              <DatePill>Today</DatePill>
              <Bubble out tail gap={18} place="inline" time="1:38 PM">
                Salam, Sir aj possible hai apka order deliver hojae.
              </Bubble>
              <Bubble tail deleted place="below" time="3:08 PM">This message was deleted</Bubble>
              <Bubble gap={4} time="3:10 PM" reaction={<ThumbIcon />}>Ok Im waiting you. Thinks</Bubble>
              <Bubble out tail place="inline" time="6:12 PM">
                How was your watch experience with us?
              </Bubble>
              <UnreadPill>1 unread message</UnreadPill>
              <Bubble tail time="6:24 PM" reaction={<HeartIcon />}>Good</Bubble>
            </Messages>
          </Scroller>
          <DatePill $floating>Thursday</DatePill>

          <Composer onSubmit={(e) => e.preventDefault()}>
            <Field>
              <IconButton type="button" aria-label="Stickers">
                <StickerIcon />
              </IconButton>
              <MessageInput aria-label="Message" placeholder="Message" />
              <FieldActions>
                <IconButton type="button" aria-label="Attach">
                  <ClipIcon />
                </IconButton>
                <IconButton type="button" aria-label="Camera">
                  <CameraIcon />
                </IconButton>
              </FieldActions>
            </Field>
            <MicButton type="button" aria-label="Record voice message">
              <MicIcon />
            </MicButton>
          </Composer>
        </Chat>

        <NavBar>
          <NavHandle />
        </NavBar>
      </Screen>
    </>
  );
}
